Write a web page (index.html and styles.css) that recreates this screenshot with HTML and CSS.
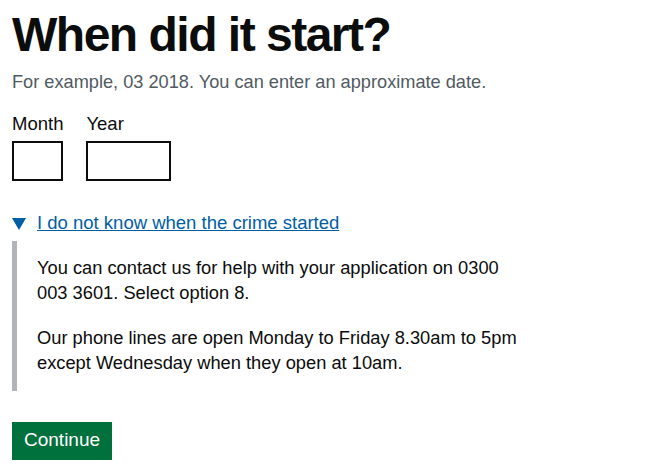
FILE: index.html
```html
<!DOCTYPE html>
<html lang="en">
<head>
<meta charset="utf-8">
<title>When did it start?</title>
<link rel="stylesheet" href="styles.css">
</head>
<body>
<main class="page">
  <form class="form">
    <fieldset class="fieldset">
      <legend class="legend"><h1 class="heading">When did it start?</h1></legend>
      <div class="hint">For example, 03 2018. You can enter an approximate date.</div>
      <div class="date-input">
        <div class="date-item">
          <label class="label" for="m">Month</label>
          <input class="input input-month" id="m" type="text">
        </div>
        <div class="date-item">
          <label class="label" for="y">Year</label>
          <input class="input input-year" id="y" type="text">
        </div>
      </div>
    </fieldset>
    <details class="details" open>
      <summary class="summary"><span class="marker"></span><span class="summary-text">I do not know when the crime started</span></summary>
      <div class="details-text">
        <p class="body">You can contact us for help with your application on 0300 003 3601. Select option 8.</p>
        <p class="body">Our phone lines are open Monday to Friday 8.30am to 5pm except Wednesday when they open at 10am.</p>
      </div>
    </details>
    <button class="button" type="button">Continue</button>
  </form>
</main>
</body>
</html>
```

FILE: styles.css
```css
html, body {
  margin: 0;
  padding: 0;
  background: #ffffff;
}
body {
  font-family: "Liberation Sans", Arial, sans-serif;
  color: #0b0c0c;
}
.page {
  padding: 10px 12px 0 12px;
  width: 518px;
}
.form {
  margin: 0;
}
.fieldset {
  margin: 0;
  padding: 0;
  border: 0;
  min-width: 0;
}
.legend {
  padding: 0;
  margin: 0 0 10px 0;
}
.heading {
  margin: 0;
  font-size: 48px;
  line-height: 50px;
  font-weight: 700;
  letter-spacing: -1.5px;
  color: #0b0c0c;
}
.hint {
  font-size: 18.2px;
  line-height: 25px;
  color: #505a5f;
  margin-bottom: 16px;
}
.date-input {
  display: flex;
  gap: 23px;
}
.date-item {
  display: flex;
  flex-direction: column;
}
.label {
  font-size: 18.5px;
  line-height: 25px;
  margin-bottom: 5px;
  color: #0b0c0c;
}
.input {
  box-sizing: border-box;
  height: 40px;
  margin: 0;
  padding: 5px;
  border: 2px solid #0b0c0c;
  border-radius: 0;
  font: inherit;
  background: #ffffff;
}
.input-month {
  width: 51px;
}
.input-year {
  width: 85px;
}
.details {
  margin-top: 29px;
  font-size: 18.3px;
  line-height: 25px;
}
.summary {
  display: flex;
  align-items: flex-start;
  list-style: none;
  margin-bottom: 6px;
  cursor: pointer;
  color: #005ea5;
}
.summary::-webkit-details-marker {
  display: none;
}
.marker {
  flex: none;
  width: 0;
  height: 0;
  margin-top: 8px;
  margin-left: 0;
  margin-right: 11px;
  border-style: solid;
  border-width: 12px 7px 0 7px;
  border-color: #005ea5 transparent transparent transparent;
}
.summary-text {
  font-size: 18.5px;
  color: #005ea5;
  text-decoration: underline;
  text-decoration-thickness: 1px;
}
.details-text {
  border-left: 5px solid #b1b4b6;
  padding: 14px 0 16px 20px;
}
.body {
  margin: 0 0 20px 0;
}
.body:last-child {
  margin-bottom: 0;
}
.button {
  display: block;
  margin: 31px 0 0 0;
  box-sizing: border-box;
  height: 38px;
  padding: 6px 10px 9px 10px;
  border: 2px solid transparent;
  border-radius: 0;
  background: #00703c;
  box-shadow: 0 2px 0 #002d18;
  color: #ffffff;
  font-family: "Liberation Sans", Arial, sans-serif;
  font-size: 19px;
  line-height: 19px;
  cursor: pointer;
}
```
